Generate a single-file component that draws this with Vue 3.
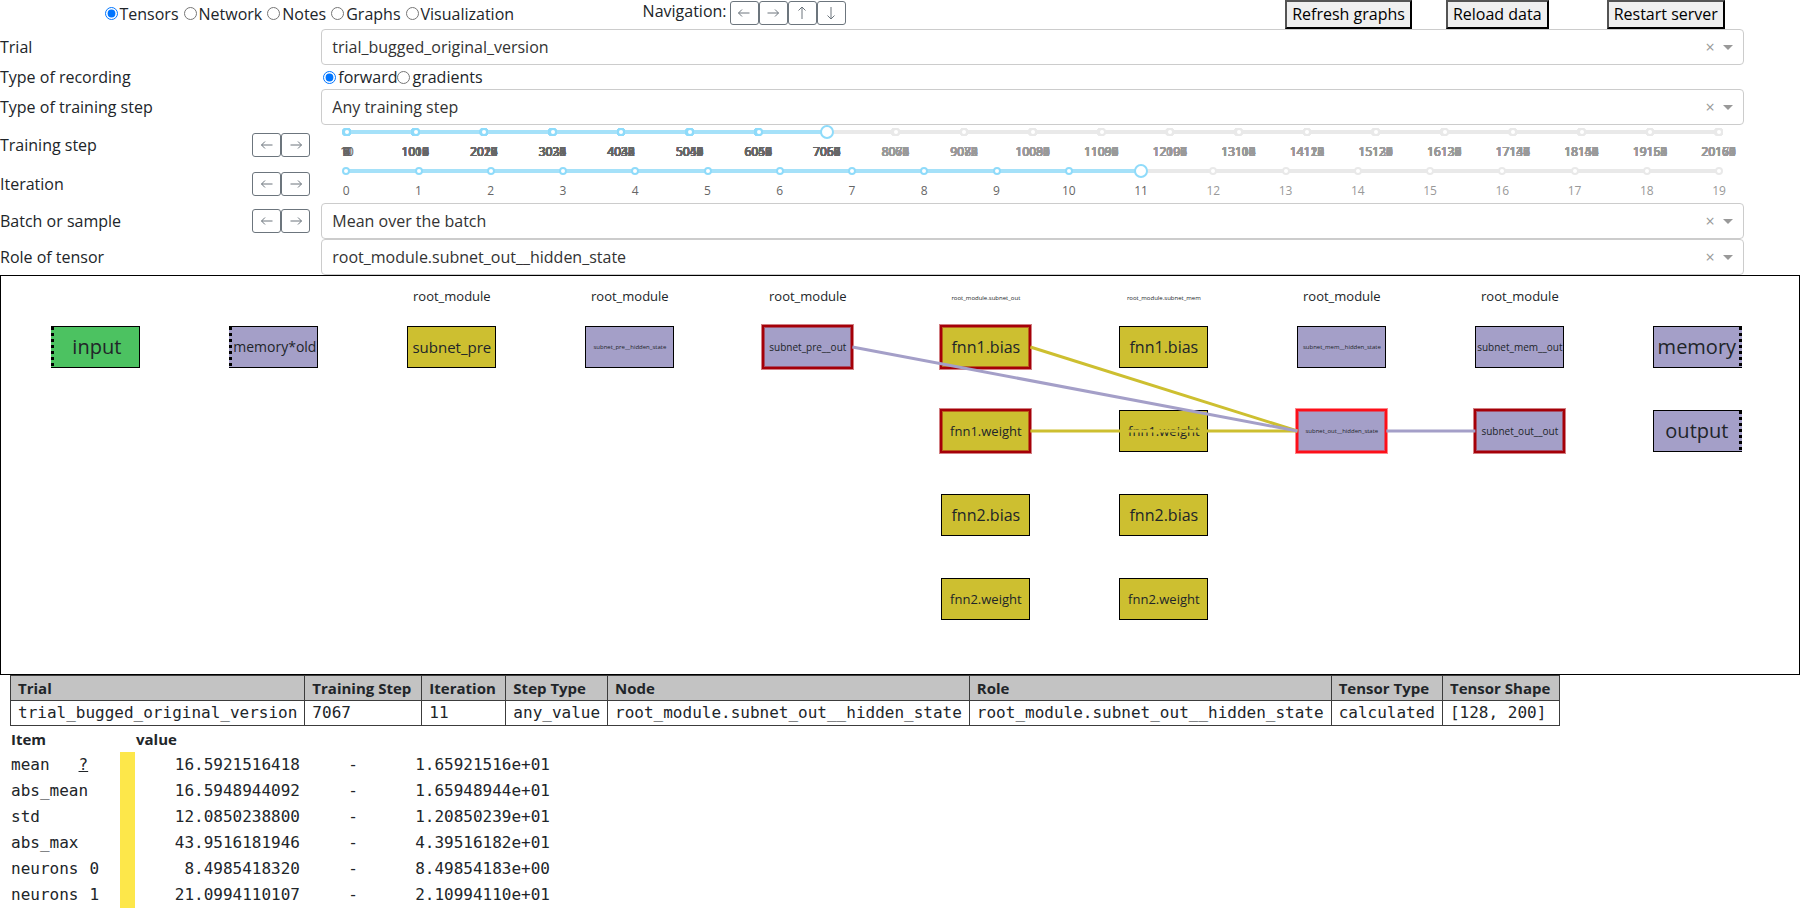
<script setup>
import { ref, computed } from 'vue'

const tabs = ['Tensors', 'Network', 'Notes', 'Graphs', 'Visualization']
const tab = ref('Tensors')
const recordings = ['forward', 'gradients']
const recording = ref('forward')

const arrows = {
  left: 'M13.5 8H2.5M6 4.500L2.500 8L6 11.500',
  right: 'M2.500 8H13.500M10 4.500L13.500 8L10 11.500',
  up: 'M8 14V2M4.500 5.500L8 2L11.500 5.500',
  down: 'M8 2V14M4.500 10.500L8 14L11.500 10.500',
}

const trial = ref('trial_bugged_original_version')
const stepType = ref('Any training step')
const batch = ref('Mean over the batch')
const role = ref('root_module.subnet_out__hidden_state')

const maxStep = 20171
const step = ref(7067)
const steps = []
for (let k = 0; k <= 20; k++) {
  for (let j = 0; j < 12; j++) steps.push(1008 * k + j)
}
const iteration = ref(11)
const iterations = Array.from({ length: 20 }, (_, i) => i)

const sliders = computed(() => [
  { id: 'step', label: 'Training step', max: maxStep, marks: steps, value: step },
  { id: 'iteration', label: 'Iteration', max: 19, marks: iterations, value: iteration },
])

const colX = (c) => 2.8 + 9.9 * c
const rowY = (r) => 50 + 84 * r
const nodeWidth = 4.95

const headings = [
  { col: 2, text: 'root_module' },
  { col: 3, text: 'root_module' },
  { col: 4, text: 'root_module' },
  { col: 5, text: 'root_module.subnet_out', tiny: true },
  { col: 6, text: 'root_module.subnet_mem', tiny: true },
  { col: 7, text: 'root_module' },
  { col: 8, text: 'root_module' },
]

const nodes = [
  { col: 0, row: 0, text: 'input', cls: 'green xl dots-left' },
  { col: 1, row: 0, text: 'memory*old', cls: 'purple fit dots-left' },
  { col: 2, row: 0, text: 'subnet_pre', cls: 'yellow md' },
  { col: 3, row: 0, text: 'subnet_pre__hidden_state', cls: 'purple xs' },
  { col: 4, row: 0, text: 'subnet_pre__out', cls: 'purple sm linked' },
  { col: 5, row: 0, text: 'fnn1.bias', cls: 'yellow lg linked' },
  { col: 5, row: 1, text: 'fnn1.weight', cls: 'yellow base linked' },
  { col: 5, row: 2, text: 'fnn2.bias', cls: 'yellow lg' },
  { col: 5, row: 3, text: 'fnn2.weight', cls: 'yellow base' },
  { col: 6, row: 0, text: 'fnn1.bias', cls: 'yellow lg' },
  { col: 6, row: 1, text: 'fnn1.weight', cls: 'yellow base' },
  { col: 6, row: 2, text: 'fnn2.bias', cls: 'yellow lg' },
  { col: 6, row: 3, text: 'fnn2.weight', cls: 'yellow base' },
  { col: 7, row: 0, text: 'subnet_mem__hidden_state', cls: 'purple xs' },
  { col: 7, row: 1, text: 'subnet_out__hidden_state', cls: 'purple xs selected' },
  { col: 8, row: 0, text: 'subnet_mem__out', cls: 'purple sm' },
  { col: 8, row: 1, text: 'subnet_out__out', cls: 'purple sm linked' },
  { col: 9, row: 0, text: 'memory', cls: 'purple xl dots-right' },
  { col: 9, row: 1, text: 'output', cls: 'purple xl dots-right' },
]

const edges = [
  { from: [5, 0], to: [7, 1], color: '#cdbf30' },
  { from: [5, 1], to: [7, 1], color: '#cdbf30' },
  { from: [4, 0], to: [7, 1], color: '#a49fc8' },
  { from: [7, 1], to: [8, 1], color: '#a49fc8' },
]

const summary = [
  ['Trial', 'trial_bugged_original_version'],
  ['Training Step', '7067'],
  ['Iteration', '11'],
  ['Step Type', 'any_value'],
  ['Node', 'root_module.subnet_out__hidden_state'],
  ['Role', 'root_module.subnet_out__hidden_state'],
  ['Tensor Type', 'calculated'],
  ['Tensor Shape', '[128, 200]'],
]

const items = [
  { name: 'mean', help: true, value: '16.5921516418', exp: '1.65921516e+01' },
  { name: 'abs_mean', value: '16.5948944092', exp: '1.65948944e+01' },
  { name: 'std', value: '12.0850238800', exp: '1.20850239e+01' },
  { name: 'abs_max', value: '43.9516181946', exp: '4.39516182e+01' },
  { name: 'neurons', index: '0', value: '8.4985418320', exp: '8.49854183e+00' },
  { name: 'neurons', index: '1', value: '21.0994110107', exp: '2.10994110e+01' },
]
</script>

<template>
  <main class="page">
    <header class="top">
      <div class="tabs">
        <label v-for="t in tabs" :key="t" class="radio">
          <input v-model="tab" type="radio" name="tab" :value="t" />{{ t }}
        </label>
      </div>
      <div class="nav">
        <span class="nav-label">Navigation:</span>
        <div class="arrow-group">
          <button v-for="(d, name) in arrows" :key="name" type="button" class="arrow" :aria-label="name">
            <svg viewBox="0 0 16 16"><path :d="d" /></svg>
          </button>
        </div>
      </div>
      <div><button type="button" class="action">Refresh graphs</button></div>
      <div><button type="button" class="action">Reload data</button></div>
      <div><button type="button" class="action">Restart server</button></div>
    </header>

    <section class="controls">
      <div class="row">
        <label class="name" for="trial">Trial</label>
        <div class="dropdown">
          <select id="trial" v-model="trial"><option>trial_bugged_original_version</option></select>
          <button type="button" class="clear" aria-label="Clear trial">×</button>
          <span class="caret"></span>
        </div>
      </div>
      <div class="row">
        <span id="rec" class="name">Type of recording</span>
        <div class="recording" role="radiogroup" aria-labelledby="rec">
          <label v-for="r in recordings" :key="r" class="radio">
            <input v-model="recording" type="radio" name="recording" :value="r" />{{ r }}
          </label>
        </div>
      </div>
      <div class="row">
        <label class="name" for="step-type">Type of training step</label>
        <div class="dropdown">
          <select id="step-type" v-model="stepType"><option>Any training step</option></select>
          <button type="button" class="clear" aria-label="Clear type of training step">×</button>
          <span class="caret"></span>
        </div>
      </div>
      <div v-for="s in sliders" :key="s.id" class="row slider-row">
        <div class="name">
          <label :for="s.id">{{ s.label }}</label>
          <div class="arrow-group">
            <button type="button" class="arrow" aria-label="Previous"><svg viewBox="0 0 16 16"><path :d="arrows.left" /></svg></button>
            <button type="button" class="arrow" aria-label="Next"><svg viewBox="0 0 16 16"><path :d="arrows.right" /></svg></button>
          </div>
        </div>
        <div class="slider">
          <div class="rail">
            <div class="filled" :style="{ width: (s.value.value / s.max) * 100 + '%' }"></div>
            <span
              v-for="m in s.marks"
              :key="m"
              class="dot"
              :class="{ active: m <= s.value.value }"
              :style="{ left: (m / s.max) * 100 + '%' }"
            ></span>
          </div>
          <input :id="s.id" v-model.number="s.value.value" class="range" type="range" min="0" :max="s.max" />
          <div class="marks">
            <span
              v-for="m in s.marks"
              :key="m"
              class="mark"
              :class="{ active: m <= s.value.value }"
              :style="{ left: (m / s.max) * 100 + '%' }"
            >{{ m }}</span>
          </div>
        </div>
      </div>
      <div class="row">
        <div class="name">
          <label for="batch">Batch or sample</label>
          <div class="arrow-group">
            <button type="button" class="arrow" aria-label="Previous"><svg viewBox="0 0 16 16"><path :d="arrows.left" /></svg></button>
            <button type="button" class="arrow" aria-label="Next"><svg viewBox="0 0 16 16"><path :d="arrows.right" /></svg></button>
          </div>
        </div>
        <div class="dropdown">
          <select id="batch" v-model="batch"><option>Mean over the batch</option></select>
          <button type="button" class="clear" aria-label="Clear batch">×</button>
          <span class="caret"></span>
        </div>
      </div>
      <div class="row">
        <label class="name" for="role">Role of tensor</label>
        <div class="dropdown">
          <select id="role" v-model="role"><option>root_module.subnet_out__hidden_state</option></select>
          <button type="button" class="clear" aria-label="Clear role">×</button>
          <span class="caret"></span>
        </div>
      </div>
    </section>

    <section class="graph">
      <div
        v-for="h in headings"
        :key="h.col"
        class="heading"
        :class="{ tiny: h.tiny }"
        :style="{ left: colX(h.col) + '%' }"
      >{{ h.text }}</div>
      <div
        v-for="n in nodes"
        :key="n.col + '-' + n.row"
        class="node"
        :class="n.cls"
        :style="{ left: colX(n.col) + '%', top: rowY(n.row) + 'px' }"
      ><span>{{ n.text }}</span></div>
      <svg class="edges">
        <line
          v-for="(e, i) in edges"
          :key="i"
          :x1="colX(e.from[0]) + nodeWidth + '%'"
          :y1="rowY(e.from[1]) + 21"
          :x2="colX(e.to[0]) + '%'"
          :y2="rowY(e.to[1]) + 21"
          :stroke="e.color"
        />
      </svg>
    </section>

    <section class="details">
      <table class="summary">
        <thead>
          <tr><th v-for="c in summary" :key="c[0]" scope="col">{{ c[0] }}</th></tr>
        </thead>
        <tbody>
          <tr><td v-for="c in summary" :key="c[0]">{{ c[1] }}</td></tr>
        </tbody>
      </table>

      <table class="items">
        <thead>
          <tr>
            <th class="c-name" scope="col">Item</th>
            <th class="c-bar"></th>
            <th class="c-value" scope="col">value</th>
            <th class="c-dash"></th>
            <th class="c-exp"></th>
          </tr>
        </thead>
        <tbody>
          <tr v-for="(r, i) in items" :key="i">
            <td class="item">{{ r.name }}<a v-if="r.help" class="help" href="#" title="Mean of the tensor">?</a><span v-if="r.index" class="index">{{ r.index }}</span></td>
            <td class="bar"></td>
            <td class="num">{{ r.value }}</td>
            <td class="dash">-</td>
            <td class="num">{{ r.exp }}</td>
          </tr>
        </tbody>
      </table>
    </section>
  </main>
</template>

<style>
body {
  background: #fff;
}
</style>

<style scoped>
.page {
  box-sizing: border-box;
  padding-right: 4px;
  font-family: "Open Sans", "Noto Sans", sans-serif;
  font-size: 16px;
  line-height: 24px;
  color: #212529;
  overflow: hidden;
}
.page * {
  box-sizing: border-box;
}
.top {
  display: grid;
  grid-template-columns: 35.7% 35.7% 8.93% 8.93% 1fr;
  height: 29px;
}
.tabs {
  display: flex;
  justify-content: center;
  align-items: center;
  gap: 5px;
  padding: 0 24px 2px 0;
}
.radio {
  display: inline-flex;
  align-items: center;
  gap: 2px;
}
.radio input {
  width: 13px;
  height: 13px;
  margin: 0;
}
.nav {
  display: flex;
  align-items: flex-start;
  gap: 3px;
  padding-top: 1px;
}
.nav-label {
  line-height: 20px;
}
.arrow-group {
  display: flex;
}
.arrow {
  width: 29px;
  height: 24px;
  padding: 0;
  display: flex;
  align-items: center;
  justify-content: center;
  background: #fff;
  border: 1px solid #6c757d;
  border-radius: 3px;
}
.arrow svg {
  width: 16px;
  height: 16px;
  fill: none;
  stroke: #6c757d;
}
.action {
  height: 29px;
  padding: 0 5px 2px;
  font: inherit;
  color: #000;
  background: #efefef;
  border: 2px outset #000;
  white-space: nowrap;
}
.row {
  display: grid;
  grid-template-columns: 17.85% 1fr;
  align-items: center;
}
.name {
  display: flex;
  align-items: center;
  justify-content: space-between;
  padding-right: 11px;
}
.dropdown {
  position: relative;
  display: flex;
  align-items: center;
  height: 36px;
  margin-right: 56px;
}
.dropdown select {
  appearance: none;
  width: 100%;
  height: 36px;
  padding: 0 52px 0 10px;
  font: inherit;
  color: #333;
  background: #fff;
  border: 1px solid #ccc;
  border-radius: 4px;
}
.clear {
  position: absolute;
  right: 25px;
  width: 18px;
  height: 24px;
  padding: 0;
  border: 0;
  background: none;
  font: inherit;
  color: #999;
}
.caret {
  position: absolute;
  right: 11px;
  border: 5px solid transparent;
  border-top-color: #999;
  border-bottom-width: 0;
}
.recording {
  display: flex;
  height: 24px;
  padding-left: 2px;
}
.slider-row {
  height: 39px;
}
.slider {
  position: relative;
  height: 39px;
  margin: 0 81px 0 25px;
}
.rail {
  position: absolute;
  top: 5px;
  left: 0;
  right: 0;
  height: 4px;
  background: #e9e9e9;
}
.filled {
  height: 4px;
  background: #a5e1f9;
}
.dot {
  position: absolute;
  top: -2px;
  width: 8px;
  height: 8px;
  margin-left: -4px;
  background: #fff;
  border: 2px solid #e9e9e9;
  border-radius: 50%;
}
.dot.active {
  border-color: #8fdbfa;
}
.range {
  appearance: none;
  position: absolute;
  top: 0;
  left: -7px;
  width: calc(100% + 14px);
  height: 14px;
  margin: 0;
  background: transparent;
}
.range::-webkit-slider-thumb {
  appearance: none;
  width: 14px;
  height: 14px;
  background: #fff;
  border: 2px solid #8fdbfa;
  border-radius: 50%;
}
.marks {
  position: absolute;
  top: 18px;
  left: 0;
  right: 0;
  font-size: 12px;
  line-height: 18px;
}
.mark {
  position: absolute;
  transform: translateX(-50%);
  color: #999;
}
.mark.active {
  color: #666;
}
.graph {
  position: relative;
  height: 400px;
  border: 1px solid #000;
}
.heading {
  position: absolute;
  top: 9px;
  width: 4.95%;
  display: flex;
  justify-content: center;
  font-size: 13px;
  line-height: 22px;
}
.heading.tiny {
  font-size: 6px;
  line-height: 26px;
}
.node {
  position: absolute;
  width: 4.95%;
  height: 42px;
  display: flex;
  align-items: center;
  justify-content: center;
  border: 1px solid #000;
  white-space: nowrap;
}
.green { background: #4cc261; }
.purple { background: #a49fc8; }
.yellow { background: #cdbf30; }
.xl { font-size: 20px; }
.lg { font-size: 16px; }
.md { font-size: 15px; }
.fit { font-size: 14px; }
.base { font-size: 13px; }
.sm { font-size: 10px; }
.xs { font-size: 6px; }
.linked {
  border-color: #a50008;
  box-shadow: 0 0 0 1px #a50008, 0 0 0 2px rgba(165, 0, 8, 0.5), inset 0 0 0 1px rgba(165, 0, 8, 0.5);
}
.selected {
  border-color: #fd0f19;
  box-shadow: 0 0 0 1px #fd0f19, 0 0 0 2px rgba(253, 15, 25, 0.5), inset 0 0 0 1px rgba(253, 15, 25, 0.5);
}
.dots-left::before,
.dots-right::before {
  content: "";
  position: absolute;
  top: 0;
  bottom: 0;
  width: 3px;
  background: repeating-linear-gradient(#000 0 3px, transparent 3px 6px);
}
.dots-left { border-left: 0; padding-left: 3px; }
.dots-left::before { left: 0; }
.dots-right { border-right: 0; padding-right: 3px; }
.dots-right::before { right: 0; }
.edges {
  position: absolute;
  inset: 0;
  width: 100%;
  height: 100%;
  pointer-events: none;
}
.edges line {
  stroke-width: 3px;
}
.details {
  padding-left: 10px;
}
table {
  border-collapse: collapse;
}
th {
  text-align: left;
}
td {
  font-family: "DejaVu Sans Mono", monospace;
}
.summary th,
.summary td {
  height: 25px;
  padding: 0 7px;
  border: 1px solid #3c3c3c;
  white-space: nowrap;
}
.summary th {
  min-width: 84px;
  font-size: 15px;
  background: #c3c3c3;
}
.summary th:nth-child(2),
.summary th:last-child {
  min-width: 117px;
}
.items {
  table-layout: fixed;
  width: 540px;
}
.items th,
.items td {
  height: 26px;
  padding: 0;
  white-space: nowrap;
}
.items th {
  font-size: 15px;
}
.items .c-name,
.items .item {
  padding-left: 1px;
}
.items .c-value {
  padding-left: 1px;
}
.c-name { width: 110px; }
.c-bar { width: 15px; }
.c-value { width: 165px; }
.c-dash { width: 106px; }
.bar { background: #fde74a; }
.num { text-align: right; }
.dash { text-align: center; }
.help {
  margin-left: 29px;
  color: inherit;
}
.index {
  margin-left: 11px;
}
</style>
